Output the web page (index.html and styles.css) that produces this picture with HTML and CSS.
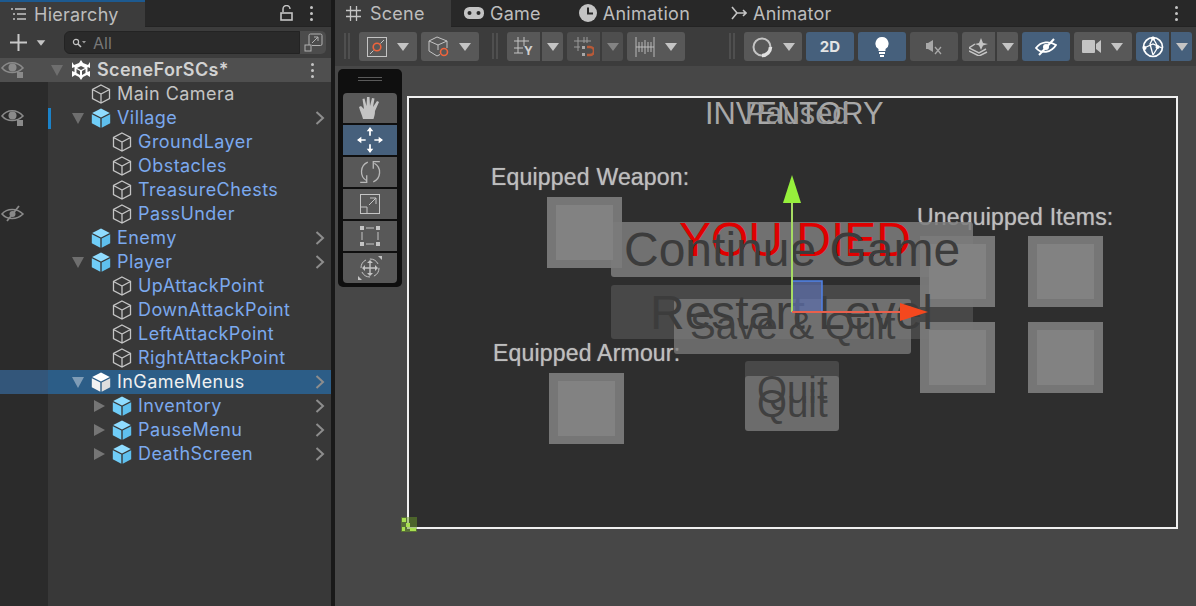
FILE: index.html
```html
<!DOCTYPE html>
<html lang="en">
<head>
    <meta charset="UTF-8">
    <title>Unity Editor</title>
    <link rel="stylesheet" href="styles.css">
</head>
<body>
    <svg class="defs" width="0" height="0">
        <symbol id="cube" viewBox="0 0 20 20"><path d="M10 1 18.500 5.500V14.500L10 19 1.500 14.500V5.500Z M1.500 5.500 10 10 18.500 5.500 M10 10V19" fill="none" stroke="#c4c4c4" stroke-width="1.300"/></symbol>
        <symbol id="cube-blue" viewBox="0 0 20 20"><path d="M10 .5 18.800 5 10 9.400 1.200 5Z" fill="#8fdcff"/><path d="M.8 6.200 9.300 10.600V19.800L.8 15.300Z" fill="#6fcdf8"/><path d="M19.200 6.200 10.700 10.600V19.800L19.200 15.300Z" fill="#5fc0ee"/></symbol>
        <symbol id="cube-white" viewBox="0 0 20 20"><path d="M10 .5 18.800 5 10 9.400 1.200 5Z" fill="#fff"/><path d="M.8 6.200 9.300 10.600V19.800L.8 15.300Z" fill="#f2f2f2"/><path d="M19.200 6.200 10.700 10.600V19.800L19.200 15.300Z" fill="#dedede"/></symbol>
        <symbol id="eye" viewBox="0 0 24 18"><path d="M1 7C6 0 16 0 22 7 16 13 6 13 1 7Z" fill="none" stroke="#8a8a8a" stroke-width="1.600"/><circle cx="11.500" cy="6.500" r="4" fill="#8a8a8a"/><rect x="16" y="11" width="6" height="6" fill="#8a8a8a"/></symbol>
        <symbol id="chevron" viewBox="0 0 10 14"><path d="M1.500 1 8 7 1.500 13" fill="none" stroke="#8d8d8d" stroke-width="2"/></symbol>
        <symbol id="caret" viewBox="0 0 14 8"><path d="M1 0H13L7 8Z" fill="#c4c4c4"/></symbol>
    </svg>

    <div class="editor">
        <section class="hierarchy">
            <div class="tab-strip">
                <div class="tab tab-active tab-hierarchy">
                    <svg class="tab-icon" width="15" height="12" viewBox="0 0 15 12"><path d="M0 1H2M4 1H15M2 6H4M6 6H15M2 11H4M6 11H15" stroke="#c4c4c4" stroke-width="1.300"/></svg>
                    Hierarchy
                </div>
                <div class="tab-tools">
                    <svg width="13" height="16" viewBox="0 0 13 16"><path d="M3 7V4A3.500 3.500 0 0 1 10 4" fill="none" stroke="#c4c4c4" stroke-width="1.500"/><rect x="1" y="8" width="11" height="7" fill="none" stroke="#c4c4c4" stroke-width="1.600"/></svg>
                    <span class="dots"><i></i><i></i><i></i></span>
                </div>
            </div>
            <div class="search-bar">
                <svg class="plus" width="17" height="17" viewBox="0 0 17 17"><path d="M8.500 0V17M0 8.500H17" stroke="#c8c8c8" stroke-width="2"/></svg>
                <svg class="caret-small" width="10" height="6"><use href="#caret"/></svg>
                <div class="search-field">
                    <svg width="14" height="10" viewBox="0 0 14 10"><circle cx="4" cy="4" r="2.600" fill="none" stroke="#c4c4c4" stroke-width="1.200"/><path d="M6 6 9 9" stroke="#c4c4c4" stroke-width="1.600"/><path d="M10 3H14L12 5.500Z" fill="#9a9a9a"/></svg>
                    <span>All</span>
                </div>
                <div class="search-btn">
                    <svg width="19" height="19" viewBox="0 0 19 19"><path d="M5 12V2.500A1.500 1.500 0 0 1 6.500 1H16.500A1.500 1.500 0 0 1 18 2.500V11A1.500 1.500 0 0 1 16.500 12.500H8" fill="none" stroke="#b0b0b0"/><rect x="1" y="12" width="6" height="6" fill="none" stroke="#b0b0b0"/><path d="M8 10 14 4M10 4H14V8" fill="none" stroke="#b0b0b0"/></svg>
                </div>
            </div>

            <div class="row row-scene">
                <div class="gutter"><svg width="24" height="18"><use href="#eye"/></svg></div>
                <div class="row-body lvl0">
                    <span class="arrow arrow-down"></span>
                    <svg class="scene-icon" width="18" height="20" viewBox="0 0 18 20"><path d="M9 0 11 3 16 5 18 2V8L15.500 7V12L18 11V17L15 15 11 17 9 20 7 17 3 15 0 17V11L2.500 12V7L0 8V2L2 5 7 3Z" fill="#fff"/><path d="M9 6 13 8 9 10 5 8ZM4.500 9 8 11V15L4.500 13ZM13.500 9 10 11V15L13.500 13Z" fill="#505050"/></svg>
                    <span class="name name-scene">SceneForSCs*</span>
                    <span class="dots row-dots"><i></i><i></i><i></i></span>
                </div>
            </div>
            <div class="row">
                <div class="gutter"></div>
                <div class="row-body lvl1"><span class="arrow"></span><svg class="obj" width="20" height="20"><use href="#cube"/></svg><span class="name">Main Camera</span></div>
            </div>
            <div class="row">
                <div class="gutter"><svg width="24" height="18"><use href="#eye"/></svg></div>
                <div class="row-body lvl1 marked"><span class="arrow arrow-down"></span><svg class="obj" width="20" height="20"><use href="#cube-blue"/></svg><span class="name prefab">Village</span><svg class="chev" width="10" height="14"><use href="#chevron"/></svg></div>
            </div>
            <div class="row">
                <div class="gutter"></div>
                <div class="row-body lvl2"><span class="arrow"></span><svg class="obj" width="20" height="20"><use href="#cube"/></svg><span class="name prefab">GroundLayer</span></div>
            </div>
            <div class="row">
                <div class="gutter"></div>
                <div class="row-body lvl2"><span class="arrow"></span><svg class="obj" width="20" height="20"><use href="#cube"/></svg><span class="name prefab">Obstacles</span></div>
            </div>
            <div class="row">
                <div class="gutter"></div>
                <div class="row-body lvl2"><span class="arrow"></span><svg class="obj" width="20" height="20"><use href="#cube"/></svg><span class="name prefab">TreasureChests</span></div>
            </div>
            <div class="row">
                <div class="gutter">
                    <svg width="24" height="18" viewBox="0 0 24 18"><path d="M1 9C6 3 16 3 22 9 16 15 6 15 1 9Z" fill="none" stroke="#8a8a8a" stroke-width="1.600"/><circle cx="11.500" cy="9" r="3" fill="#8a8a8a"/><path d="M6 16 18 1" stroke="#8a8a8a" stroke-width="1.800"/></svg>
                </div>
                <div class="row-body lvl2"><span class="arrow"></span><svg class="obj" width="20" height="20"><use href="#cube"/></svg><span class="name prefab">PassUnder</span></div>
            </div>
            <div class="row">
                <div class="gutter"></div>
                <div class="row-body lvl1"><span class="arrow"></span><svg class="obj" width="20" height="20"><use href="#cube-blue"/></svg><span class="name prefab">Enemy</span><svg class="chev" width="10" height="14"><use href="#chevron"/></svg></div>
            </div>
            <div class="row">
                <div class="gutter"></div>
                <div class="row-body lvl1"><span class="arrow arrow-down"></span><svg class="obj" width="20" height="20"><use href="#cube-blue"/></svg><span class="name prefab">Player</span><svg class="chev" width="10" height="14"><use href="#chevron"/></svg></div>
            </div>
            <div class="row">
                <div class="gutter"></div>
                <div class="row-body lvl2"><span class="arrow"></span><svg class="obj" width="20" height="20"><use href="#cube"/></svg><span class="name prefab">UpAttackPoint</span></div>
            </div>
            <div class="row">
                <div class="gutter"></div>
                <div class="row-body lvl2"><span class="arrow"></span><svg class="obj" width="20" height="20"><use href="#cube"/></svg><span class="name prefab">DownAttackPoint</span></div>
            </div>
            <div class="row">
                <div class="gutter"></div>
                <div class="row-body lvl2"><span class="arrow"></span><svg class="obj" width="20" height="20"><use href="#cube"/></svg><span class="name prefab">LeftAttackPoint</span></div>
            </div>
            <div class="row">
                <div class="gutter"></div>
                <div class="row-body lvl2"><span class="arrow"></span><svg class="obj" width="20" height="20"><use href="#cube"/></svg><span class="name prefab">RightAttackPoint</span></div>
            </div>
            <div class="row row-selected">
                <div class="gutter"></div>
                <div class="row-body lvl1"><span class="arrow arrow-down"></span><svg class="obj" width="20" height="20"><use href="#cube-white"/></svg><span class="name name-selected">InGameMenus</span><svg class="chev" width="10" height="14"><use href="#chevron"/></svg></div>
            </div>
            <div class="row">
                <div class="gutter"></div>
                <div class="row-body lvl2"><span class="arrow arrow-right"></span><svg class="obj" width="20" height="20"><use href="#cube-blue"/></svg><span class="name prefab">Inventory</span><svg class="chev" width="10" height="14"><use href="#chevron"/></svg></div>
            </div>
            <div class="row">
                <div class="gutter"></div>
                <div class="row-body lvl2"><span class="arrow arrow-right"></span><svg class="obj" width="20" height="20"><use href="#cube-blue"/></svg><span class="name prefab">PauseMenu</span><svg class="chev" width="10" height="14"><use href="#chevron"/></svg></div>
            </div>
            <div class="row">
                <div class="gutter"></div>
                <div class="row-body lvl2"><span class="arrow arrow-right"></span><svg class="obj" width="20" height="20"><use href="#cube-blue"/></svg><span class="name prefab">DeathScreen</span><svg class="chev" width="10" height="14"><use href="#chevron"/></svg></div>
            </div>
            <div class="rest"><div class="gutter"></div></div>
        </section>

        <section class="scene">
            <div class="tab-strip">
                <div class="tab tab-active tab-scene">
                    <svg class="tab-icon" width="15" height="15" viewBox="0 0 15 15"><path d="M4.500 0V15M10.500 0V15M0 4.500H15M0 10.500H15" stroke="#c4c4c4" stroke-width="1.300"/></svg>
                    Scene
                </div>
                <div class="tab tab-game">
                    <svg class="tab-icon" width="20" height="12" viewBox="0 0 20 12"><rect y="0" width="20" height="12" rx="5.500" fill="#c4c4c4"/><circle cx="5.500" cy="6" r="2" fill="#282828"/><circle cx="14.500" cy="6" r="2" fill="#282828"/></svg>
                    Game
                </div>
                <div class="tab tab-anim">
                    <svg class="tab-icon" width="18" height="18" viewBox="0 0 18 18"><circle cx="9" cy="9" r="9" fill="#c4c4c4"/><path d="M9 3.500V9.500H14" fill="none" stroke="#282828" stroke-width="2"/></svg>
                    Animation
                </div>
                <div class="tab tab-animator">
                    <svg class="tab-icon" width="16" height="14" viewBox="0 0 16 14"><path d="M1 1 6 7H15M1 13 6 7M12 4 15 7 12 10" fill="none" stroke="#c4c4c4" stroke-width="1.600"/></svg>
                    Animator
                </div>
                <span class="dots tab-dots"><i></i><i></i><i></i></span>
            </div>

            <div class="toolbar">
                <span class="grip"></span>
                <div class="tb tb-wide">
                    <svg width="20" height="20" viewBox="0 0 20 20"><rect x=".5" y=".5" width="19" height="19" fill="none" stroke="#c4c4c4"/><path d="M3 17 6.500 13.500M13.500 6.500 17 3" stroke="#c4c4c4"/><circle cx="10" cy="10" r="3.800" fill="none" stroke="#f0643c" stroke-width="1.600"/></svg>
                    <svg width="14" height="8"><use href="#caret"/></svg>
                </div>
                <div class="tb tb-wide">
                    <svg width="21" height="21" viewBox="0 0 21 21"><path d="M9 1 19 5V12M9 1 1 5V15L9 20 12 18.500M1 5 10 9 19 5M10 9V14" fill="none" stroke="#c4c4c4"/><circle cx="16" cy="16" r="3.500" fill="none" stroke="#f0643c" stroke-width="1.600"/></svg>
                    <svg width="14" height="8"><use href="#caret"/></svg>
                </div>
                <span class="grip grip-2"></span>
                <div class="tb tb-main">
                    <svg width="20" height="20" viewBox="0 0 20 20"><path d="M4 0V16M10 0V9M0 4H15M0 11H9M0 16H9" stroke="#c4c4c4" fill="none"/><text class="snap-y" x="10" y="18">Y</text></svg>
                </div>
                <div class="tb tb-split"><svg width="14" height="8"><use href="#caret"/></svg></div>
                <div class="tb tb-main tb-dim">
                    <svg width="20" height="20" viewBox="0 0 20 20"><path d="M4 0V14M10 0V6M0 4H17M0 10H6M13 0V6" stroke="#9a9a9a" fill="none"/><rect x="8" y="9" width="3" height="3" fill="#a8a8a8"/><rect x="8" y="16" width="3" height="3" fill="#a8a8a8"/><path d="M13 10H16A3.500 3.500 0 0 1 16 18H13" fill="none" stroke="#b85a38" stroke-width="2.500"/></svg>
                </div>
                <div class="tb tb-split tb-dim"><svg class="faded" width="14" height="8"><use href="#caret"/></svg></div>
                <div class="tb tb-wide">
                    <svg width="20" height="20" viewBox="0 0 20 20"><path d="M1 0V20M19 0V20M1 10H19M4 5V15M7 5V15M10 3V17M13 5V15M16 5V15" stroke="#c4c4c4" fill="none" stroke-width=".9"/></svg>
                    <svg width="14" height="8"><use href="#caret"/></svg>
                </div>
                <span class="grip grip-3"></span>
                <div class="tb tb-wide">
                    <svg width="22" height="22" viewBox="0 0 22 22"><circle cx="11" cy="11" r="8.500" fill="none" stroke="#c4c4c4" stroke-width="2"/><path d="M11 19.500A8.500 8.500 0 0 0 19.500 11" fill="none" stroke="#e0e0e0" stroke-width="3.500"/></svg>
                    <svg width="14" height="8"><use href="#caret"/></svg>
                </div>
                <div class="tb tb-on tb-2d">2D</div>
                <div class="tb tb-on">
                    <svg width="14" height="20" viewBox="0 0 14 20"><path d="M7 0A6.500 6.500 0 0 1 10.500 12V14H3.500V12A6.500 6.500 0 0 1 7 0Z" fill="#fff"/><rect x="4" y="15" width="6" height="2" fill="#fff"/><rect x="5" y="18" width="4" height="2" fill="#fff"/></svg>
                </div>
                <div class="tb tb-dim2">
                    <svg width="18" height="16" viewBox="0 0 18 16"><path d="M1 4H3L8 1V13L3 10H1Z" fill="#a8a8a8"/><path d="M10 8 16 15M16 8 10 15" stroke="#a8a8a8" stroke-width="1.300"/></svg>
                </div>
                <div class="tb tb-main">
                    <svg width="20" height="18" viewBox="0 0 20 18"><path d="M12 0 14 5 19 6 14 7.500 12 12 10 7.500 6 6 10 5Z" fill="#c4c4c4"/><path d="M6 6 0 10 10 15 17 11" fill="none" stroke="#c4c4c4" stroke-width="1.500"/><path d="M0 13 10 18 18 14" fill="none" stroke="#c4c4c4" stroke-width="1.500"/></svg>
                </div>
                <div class="tb tb-split"><svg width="14" height="8"><use href="#caret"/></svg></div>
                <div class="tb tb-on">
                    <svg width="22" height="18" viewBox="0 0 22 18"><path d="M1 10C6 3 15 3 21 7 16 15 6 16 1 10Z" fill="none" stroke="#fff" stroke-width="1.800"/><circle cx="11" cy="9" r="3" fill="#fff"/><path d="M4 17 19 1" stroke="#fff" stroke-width="2"/></svg>
                </div>
                <div class="tb tb-wide">
                    <svg width="19" height="13" viewBox="0 0 19 13"><rect width="13" height="13" rx="1" fill="#c4c4c4"/><path d="M14 4 19 0V13L14 9Z" fill="#c4c4c4"/></svg>
                    <svg width="14" height="8"><use href="#caret"/></svg>
                </div>
                <div class="tb tb-main tb-on">
                    <svg width="22" height="22" viewBox="0 0 22 22"><circle cx="11" cy="11" r="9.500" fill="none" stroke="#fff" stroke-width="1.700"/><path d="M2 12 11 8 20 12M11 2 8 8 11 19M11 2 16 11 11 19" fill="none" stroke="#fff" stroke-width="1.300"/><circle cx="11" cy="2.500" r="2" fill="#fff"/><circle cx="15.500" cy="11" r="2" fill="#fff"/><circle cx="2.500" cy="12" r="2" fill="#fff"/></svg>
                </div>
                <div class="tb tb-split tb-on"><svg width="14" height="8"><use href="#caret"/></svg></div>
            </div>

            <div class="viewport">
                <div class="tools">
                    <div class="tools-grip"></div>
                    <div class="tool tool-first">
                        <svg width="22" height="26" viewBox="0 0 22 24"><path d="M4 23C3 19 1 15 0 11L2 10 5 13 3.500 3 5.500 2.500 7.500 10 8 1H10.500L11 10 13 2 15.500 2.500 14 11 18 5 20 6 16 15C16 19 15 21 14.500 23Z" fill="#c4c4c4"/></svg>
                    </div>
                    <div class="tool tool-on">
                        <svg width="26" height="26" viewBox="0 0 24 24"><path d="M12 1V8M12 16V23M1 12H8M16 12H23" stroke="#fff" stroke-width="1.600"/><path d="M9 4 12 0 15 4ZM9 20 12 24 15 20ZM4 9 0 12 4 15ZM20 9 24 12 20 15Z" fill="#fff"/></svg>
                    </div>
                    <div class="tool">
                        <svg width="24" height="24" viewBox="0 0 22 22"><path d="M15 3A9.500 9.500 0 0 1 14 20M8 19A9.500 9.500 0 0 1 9 2" fill="none" stroke="#b8b8b8" stroke-width="1.200"/><path d="M14 8V1.500H20M8 14V20.500H2" fill="none" stroke="#b8b8b8" stroke-width="1.200"/></svg>
                    </div>
                    <div class="tool">
                        <svg width="20" height="20" viewBox="0 0 20 20"><rect x=".5" y=".5" width="19" height="19" fill="none" stroke="#c4c4c4"/><path d="M.5 13H7V19.500M9 11 16 4M10 4H16V10" fill="none" stroke="#c4c4c4"/></svg>
                    </div>
                    <div class="tool">
                        <svg width="20" height="20" viewBox="0 0 20 20"><path d="M2 6V14M6 2H14M6 18H14M18 6V14" stroke="#c4c4c4"/><path d="M0 0H4V4H0ZM16 0H20V4H16ZM0 16H4V20H0ZM16 16H20V20H16Z" fill="#c4c4c4"/></svg>
                    </div>
                    <div class="tool tool-last">
                        <svg width="24" height="24" viewBox="0 0 24 24"><circle cx="12" cy="12" r="9" fill="none" stroke="#c4c4c4" stroke-dasharray="10 4"/><path d="M12 5V19M5 12H19" stroke="#c4c4c4" stroke-width="1.400"/><path d="M9 7 12 4 15 7ZM9 17 12 20 15 17ZM7 9 4 12 7 15ZM17 9 20 12 17 15ZM20 0H24V4ZM0 24V20L4 24Z" fill="#c4c4c4"/></svg>
                    </div>
                </div>

                <div class="canvas">
                    <div class="ui-text title">INVENTORY</div>
                    <div class="ui-text title paused">Paused</div>
                    <div class="ui-text label label-weapon">Equipped Weapon:</div>
                    <div class="ui-text label label-armour">Equipped Armour:</div>
                    <div class="ui-text label label-items">Unequipped Items:</div>

                    <div class="btn btn-restart"></div>
                    <div class="btn btn-continue"></div>
                    <div class="ui-text died">YOU DIED</div>
                    <div class="btn btn-save"></div>
                    <div class="btn btn-quit-back"></div>
                    <div class="btn btn-quit"></div>

                    <div class="slot slot-weapon"></div>
                    <div class="slot slot-armour"></div>
                    <div class="slot slot-a"></div>
                    <div class="slot slot-b"></div>
                    <div class="slot slot-c"></div>
                    <div class="slot slot-d"></div>

                    <div class="ui-text big txt-continue">Continue Game</div>
                    <div class="ui-text big txt-restart">Restart Level</div>
                    <div class="ui-text mid txt-save">Save &amp; Quit</div>
                    <div class="ui-text mid txt-quit1">Quit</div>
                    <div class="ui-text mid txt-quit2">Quit</div>
                </div>

                <svg class="gizmo" width="160" height="150" viewBox="0 0 160 150">
                    <rect x="20" y="106" width="30" height="31" fill="#5c6ea8" fill-opacity=".75" stroke="#4f82e8" stroke-width="1.500"/>
                    <rect x="19" y="28" width="2" height="109" fill="#a6dc64"/>
                    <path d="M20 0 29 28H11Z" fill="#96f03c"/>
                    <rect x="20" y="136" width="110" height="2" fill="#e8604c"/>
                    <path d="M156 137 128 128V146Z" fill="#f4481e"/>
                </svg>

                <svg class="rect-tool" width="16" height="15" viewBox="0 0 16 15">
                    <rect width="16" height="15" fill="#6a9a28" fill-opacity=".5"/>
                    <path d="M1 1H5V5H1ZM5 6H9V10H5ZM1 10H4V14H1ZM9 11H15V14H9Z" fill="#a8e050"/>
                </svg>
            </div>
        </section>
    </div>
</body>
</html>
```

FILE: styles.css
```css
/* page */
html, body {
    margin: 0;
    padding: 0;
    height: 100%;
    overflow: hidden;
    background-color: #191919;
}
body {
    font-family: Inter, "Noto Sans", sans-serif;
    color: #c4c4c4;
}
svg {
    display: block;
    flex: none;
}
.defs {
    position: absolute;
}
.editor {
    display: flex;
    width: 1196px;
    height: 606px;
}

/* panels */
.hierarchy {
    width: 331px;
    display: flex;
    flex-direction: column;
    border-right: 4px solid #191919;
    background-color: #383838;
}
.scene {
    flex: 1;
    min-width: 0;
    display: flex;
    flex-direction: column;
}

/* tabs */
.tab-strip {
    height: 27px;
    flex: none;
    display: flex;
    align-items: center;
    background-color: #282828;
    font-size: 18px;
    border-bottom: 1px solid #232323;
    box-sizing: border-box;
}
.tab {
    height: 27px;
    display: flex;
    align-items: center;
    color: #bdbdbd;
    letter-spacing: .25px;
}
.tab-active {
    background-color: #3c3c3c;
}
.tab-hierarchy {
    width: 145px;
    padding-left: 11px;
    gap: 8px;
    box-sizing: border-box;
    border-top: 2px solid #1d5a90;
}
.tab-tools {
    margin-left: auto;
    display: flex;
    align-items: center;
    gap: 17px;
    padding-right: 18px;
    background: none;
}
.tab-scene {
    width: 116px;
    padding-left: 11px;
    gap: 9px;
    box-sizing: border-box;
}
.tab-game {
    margin-left: 13px;
    gap: 6px;
}
.tab-anim {
    margin-left: 38px;
    gap: 6px;
}
.tab-animator {
    margin-left: 41px;
    gap: 6px;
}
.tab-dots {
    margin-left: auto;
    margin-right: 18px;
}
.dots {
    display: flex;
    flex-direction: column;
    gap: 3px;
}
.dots i {
    display: block;
    width: 3px;
    height: 3px;
    border-radius: 50%;
    background-color: #c4c4c4;
}

/* search row */
.search-bar {
    height: 31px;
    flex: none;
    display: flex;
    align-items: center;
    background-color: #3c3c3c;
    padding-left: 10px;
}
.caret-small {
    margin-left: 9px;
}
.search-field {
    width: 236px;
    height: 23px;
    margin-left: 18px;
    box-sizing: border-box;
    display: flex;
    align-items: center;
    gap: 7px;
    padding-left: 7px;
    border-radius: 6px 0 0 6px;
    background-color: #2a2a2a;
    border: 1px solid #232323;
    color: #787878;
    font-size: 16px;
}
.search-btn {
    width: 26px;
    height: 23px;
    display: flex;
    align-items: center;
    justify-content: center;
    background-color: #4c4c4c;
    border-radius: 0 5px 5px 0;
}

/* tree rows */
.row {
    height: 24px;
    flex: none;
    display: flex;
}
.gutter {
    width: 48px;
    flex: none;
    display: flex;
    align-items: center;
    padding-left: 1px;
    box-sizing: border-box;
    background-color: #2b2b2b;
}
.row-body {
    flex: 1;
    min-width: 0;
    display: flex;
    align-items: center;
    position: relative;
    font-size: 18px;
    letter-spacing: .45px;
}
.lvl0 {
    padding-left: 3px;
}
.lvl1 {
    padding-left: 24px;
}
.lvl2 {
    padding-left: 45px;
}
.arrow {
    width: 19px;
    flex: none;
}
.arrow-down::before {
    content: "";
    display: block;
    width: 0;
    height: 0;
    border-left: 6px solid transparent;
    border-right: 6px solid transparent;
    border-top: 11px solid #6e6e6e;
}
.arrow-right::before {
    content: "";
    display: block;
    width: 0;
    height: 0;
    margin-left: 1px;
    border-top: 6px solid transparent;
    border-bottom: 6px solid transparent;
    border-left: 11px solid #757575;
}
.obj {
    margin-right: 6px;
}
.name {
    color: #c4c4c4;
    white-space: nowrap;
    margin-top: -1px;
}
.prefab {
    color: #7ba9ee;
}
.chev {
    position: absolute;
    left: 267px;
    top: 5px;
}
.marked::before {
    content: "";
    position: absolute;
    left: 0;
    top: 2px;
    width: 3px;
    height: 21px;
    background-color: #1b82c8;
}
.row-scene .row-body,
.row-scene .gutter {
    background-color: #4f4f4f;
}
.row-scene .arrow {
    width: 21px;
}
.scene-icon {
    margin-right: 7px;
}
.name-scene {
    font-weight: 600;
    color: #d2d2d2;
    letter-spacing: .4px;
}
.row-dots {
    position: absolute;
    left: 263px;
    top: 5px;
}
.row-selected .gutter {
    background-color: #33567a;
}
.row-selected .row-body {
    background-color: #2c5d87;
}
.name-selected {
    color: #f0f0f0;
}
.row-selected .arrow-down::before {
    border-top-color: #7f9cb6;
}
.rest {
    flex: 1;
    display: flex;
}

/* scene toolbar */
.toolbar {
    height: 39px;
    flex: none;
    display: flex;
    align-items: flex-start;
    padding: 5px 0 0 9px;
    box-sizing: border-box;
    background-color: #3c3c3c;
    gap: 4px;
}
.grip {
    width: 2px;
    height: 26px;
    margin: 1px 5px 0 0;
    border-left: 2px solid #4f4f4f;
    border-right: 2px solid #4f4f4f;
    flex: none;
}
.grip-2 {
    margin-left: 9px;
}
.grip-3 {
    margin-left: 40px;
}
.tb {
    height: 29px;
    width: 48px;
    flex: none;
    display: flex;
    align-items: center;
    justify-content: center;
    background-color: #585858;
    border-radius: 3px;
    box-sizing: border-box;
}
.tb-wide {
    width: 58px;
    gap: 9px;
}
.tb-main {
    width: 33px;
    border-radius: 3px 0 0 3px;
}
.tb-split {
    width: 21px;
    margin-left: -2px;
    border-radius: 0 3px 3px 0;
}
.tb-dim {
    background-color: #4e4e4e;
}
.tb-dim2 {
    background-color: #525252;
}
.tb-on {
    background-color: #46607c;
}
.tb-2d {
    font-size: 15px;
    font-weight: 700;
    color: #e4e4e4;
}
.faded {
    opacity: .45;
}
.snap-y {
    font-size: 12px;
    font-weight: 700;
    fill: #d0d0d0;
    font-family: Inter, sans-serif;
}

/* viewport */
.viewport {
    flex: 1;
    position: relative;
    background-color: #474747;
}
.tools {
    position: absolute;
    left: 3px;
    top: 3px;
    width: 64px;
    height: 218px;
    box-sizing: border-box;
    padding: 0 5px;
    background-color: #0f0f0f;
    border-radius: 5px;
}
.tools-grip {
    height: 24px;
    position: relative;
}
.tools-grip::before {
    content: "";
    position: absolute;
    left: 15px;
    right: 15px;
    top: 8px;
    height: 2px;
    border-top: 1px solid #5a5a5a;
    border-bottom: 1px solid #5a5a5a;
}
.tool {
    height: 30px;
    margin-bottom: 2px;
    display: flex;
    align-items: center;
    justify-content: center;
    background-color: #585858;
}
.tool-first {
    border-radius: 4px 4px 0 0;
}
.tool-last {
    border-radius: 0 0 4px 4px;
}
.tool-on {
    background-color: #46607c;
}

/* canvas contents, placed as in the scene */
.canvas {
    position: absolute;
    left: 72px;
    top: 30px;
    width: 771px;
    height: 433px;
    box-sizing: border-box;
    background-color: #2e2e2e;
    border: 2px solid #f0f0f0;
    font-family: "Liberation Sans", Arial, sans-serif;
}
.ui-text {
    position: absolute;
    white-space: nowrap;
    line-height: 1;
}
.title {
    left: 296px;
    top: 1px;
    font-size: 30.8px;
    color: #a8a8a8;
}
.paused {
    left: 336px;
    color: #9a9a9a;
}
.label {
    font-size: 23px;
    letter-spacing: .2px;
    color: #bebebe;
    text-shadow: 0 0 1px #9a9a9a;
}
.label-weapon {
    left: 82px;
    top: 68px;
}
.label-armour {
    left: 84px;
    top: 244px;
}
.label-items {
    left: 508px;
    top: 108px;
}
.slot {
    position: absolute;
    width: 75px;
    height: 71px;
    background-color: rgba(122, 122, 122, .95);
}
.slot::after {
    content: "";
    position: absolute;
    left: 9px;
    right: 9px;
    top: 8px;
    bottom: 8px;
    background-color: #828282;
}
.slot-weapon {
    left: 138px;
    top: 99px;
}
.slot-armour {
    left: 140px;
    top: 275px;
}
.slot-a {
    left: 511px;
    top: 138px;
}
.slot-b {
    left: 619px;
    top: 138px;
}
.slot-c {
    left: 511px;
    top: 224px;
}
.slot-d {
    left: 619px;
    top: 224px;
}
.btn {
    position: absolute;
    border-radius: 3px;
}
.btn-continue {
    left: 202px;
    top: 124px;
    width: 362px;
    height: 55px;
    background-color: rgba(125, 125, 125, .85);
}
.btn-restart {
    left: 202px;
    top: 187px;
    width: 362px;
    height: 54px;
    background-color: #484848;
}
.btn-save {
    left: 265px;
    top: 201px;
    width: 237px;
    height: 55px;
    background-color: rgba(125, 125, 125, .75);
}
.btn-quit-back {
    left: 336px;
    top: 263px;
    width: 94px;
    height: 55px;
    background-color: #484848;
}
.btn-quit {
    left: 336px;
    top: 278px;
    width: 94px;
    height: 55px;
    background-color: #6c6c6c;
}
.died {
    left: 270px;
    top: 118px;
    font-size: 48px;
    color: #e00000;
}
.big {
    font-size: 48px;
    color: #3c3c3c;
}
.mid {
    font-size: 38.500px;
    color: #404040;
}
.txt-continue {
    left: 215px;
    top: 128px;
}
.txt-restart {
    left: 241px;
    top: 191px;
}
.txt-save {
    left: 281px;
    top: 209px;
}
.txt-quit1 {
    left: 348px;
    top: 273px;
}
.txt-quit2 {
    left: 348px;
    top: 287px;
}

/* gizmos over the canvas */
.gizmo {
    position: absolute;
    left: 437px;
    top: 109px;
}
.rect-tool {
    position: absolute;
    left: 66px;
    top: 451px;
}
```
